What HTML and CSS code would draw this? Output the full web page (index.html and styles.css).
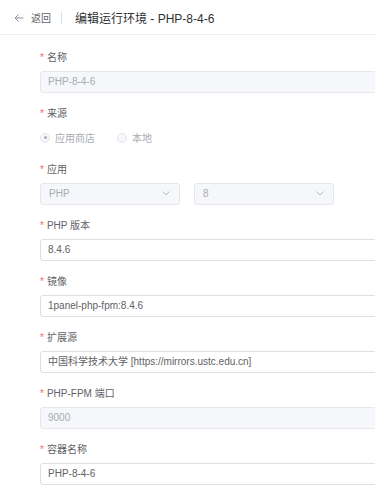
FILE: index.html
```html
<!DOCTYPE html>
<html lang="zh-CN">
<head>
<meta charset="utf-8">
<title>编辑运行环境</title>
<link rel="stylesheet" href="styles.css">
</head>
<body>
<div class="page">
<div class="header">
  <span class="back">
    <svg class="back-icon" width="10" height="10" viewBox="0 0 10 10"><path d="M9.5 5H1M4.5 1.5L1 5l3.5 3.5" fill="none" stroke="#909399" stroke-width="1"/></svg>
    <span class="back-text">返回</span>
  </span>
  <span class="sep"></span>
  <span class="title">编辑运行环境 - PHP-8-4-6</span>
</div>
<div class="form">
  <div class="item">
    <div class="label"><span class="req">*</span>名称</div>
    <div class="input disabled">PHP-8-4-6</div>
  </div>
  <div class="item">
    <div class="label"><span class="req">*</span>来源</div>
    <div class="radios">
      <span class="radio"><span class="circle checked"></span><span class="radio-text">应用商店</span></span>
      <span class="radio"><span class="circle"></span><span class="radio-text">本地</span></span>
    </div>
  </div>
  <div class="item">
    <div class="label"><span class="req">*</span>应用</div>
    <div class="selects">
      <div class="select"><span>PHP</span><svg width="8" height="5" viewBox="0 0 8 5"><path d="M0.5 0.5L4 4l3.5-3.5" fill="none" stroke="#a8abb2" stroke-width="0.8"/></svg></div>
      <div class="select"><span>8</span><svg width="8" height="5" viewBox="0 0 8 5"><path d="M0.5 0.5L4 4l3.5-3.5" fill="none" stroke="#a8abb2" stroke-width="0.8"/></svg></div>
    </div>
  </div>
  <div class="item">
    <div class="label"><span class="req">*</span>PHP 版本</div>
    <div class="input">8.4.6</div>
  </div>
  <div class="item">
    <div class="label"><span class="req">*</span>镜像</div>
    <div class="input">1panel-php-fpm:8.4.6</div>
  </div>
  <div class="item">
    <div class="label"><span class="req">*</span>扩展源</div>
    <div class="input">中国科学技术大学 [https://mirrors.ustc.edu.cn]</div>
  </div>
  <div class="item">
    <div class="label"><span class="req">*</span>PHP-FPM 端口</div>
    <div class="input disabled">9000</div>
  </div>
  <div class="item">
    <div class="label"><span class="req">*</span>容器名称</div>
    <div class="input">PHP-8-4-6</div>
  </div>
</div>
</div>
</body>
</html>
```
FILE: styles.css
```css
html, body {
  margin: 0;
  padding: 0;
  background: #ffffff;
  overflow: hidden;
}
body {
  font-family: "Liberation Sans", "Noto Sans CJK SC", sans-serif;
  font-size: 10px;
  color: #606266;
}
.page {
  width: 375px;
  height: 500px;
  overflow: hidden;
}
.header {
  display: flex;
  align-items: center;
  height: 33px;
  border-bottom: 1px solid #ebeef5;
  padding-left: 14px;
  padding-top: 1px;
}
.back {
  display: flex;
  align-items: center;
}
.back-icon {
  display: block;
  margin-right: 7px;
}
.back-text {
  font-size: 10px;
  color: #606266;
}
.sep {
  width: 1px;
  height: 12px;
  background: #dcdfe6;
  margin: 0 13px 0 10px;
}
.title {
  font-size: 12px;
  color: #303133;
}
.form {
  padding: 13.5px 0 0 40px;
  overflow: hidden;
}
.item {
  margin-bottom: 12px;
}
.label {
  height: 18px;
  line-height: 18px;
  margin-bottom: 4px;
  color: #606266;
  white-space: nowrap;
}
.req {
  color: #f56c6c;
  margin-right: 3px;
}
.input {
  box-sizing: border-box;
  width: 420px;
  height: 22px;
  line-height: 20px;
  border: 1px solid #dcdfe6;
  border-radius: 3px;
  padding: 0 7px;
  color: #606266;
  background: #ffffff;
  white-space: nowrap;
}
.input.disabled {
  background: #f5f7fa;
  border-color: #e4e7ed;
  color: #a8abb2;
}
.radios {
  display: flex;
  align-items: center;
  height: 22px;
}
.radio {
  display: flex;
  align-items: center;
  margin-right: 22px;
}
.circle {
  box-sizing: border-box;
  width: 10px;
  height: 10px;
  border-radius: 50%;
  border: 1px solid #e4e7ed;
  background: #f5f7fa;
  margin-right: 5px;
  display: flex;
  align-items: center;
  justify-content: center;
}
.circle.checked::after {
  content: "";
  width: 3px;
  height: 3px;
  border-radius: 50%;
  background: #a8abb2;
}
.radio-text {
  color: #a8abb2;
}
.selects {
  display: flex;
  gap: 14px;
}
.select {
  box-sizing: border-box;
  width: 140px;
  height: 22px;
  border: 1px solid #e4e7ed;
  border-radius: 3px;
  background: #f5f7fa;
  color: #a8abb2;
  display: flex;
  align-items: center;
  justify-content: space-between;
  padding: 0 9px 0 8px;
}
.select svg {
  display: block;
}
```
